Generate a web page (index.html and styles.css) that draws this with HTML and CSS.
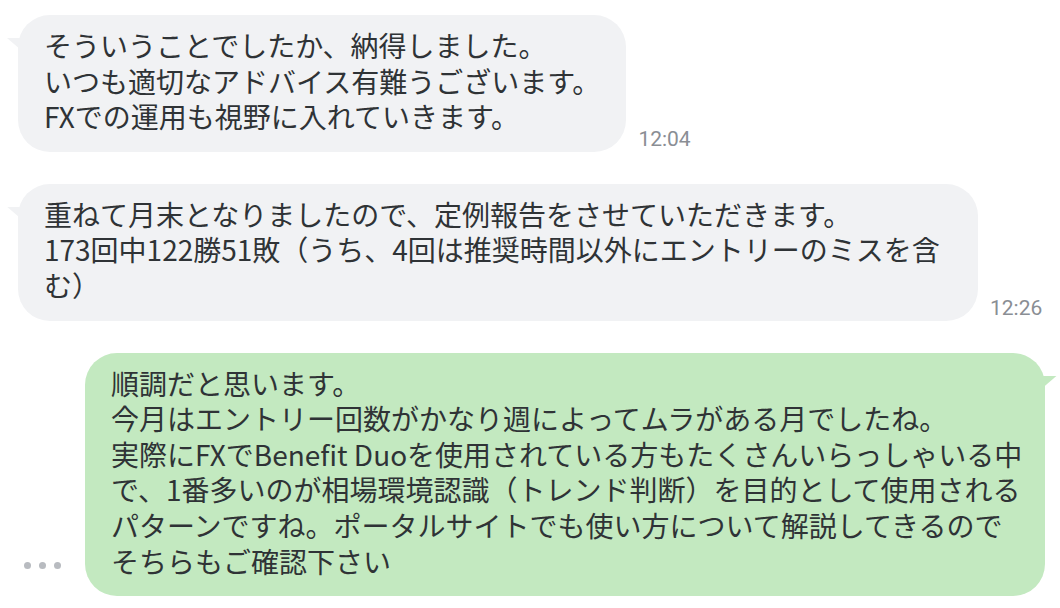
FILE: index.html
```html
<!DOCTYPE html>
<html lang="ja">
<head>
    <meta charset="UTF-8">
    <meta name="viewport" content="width=device-width, initial-scale=1.0">
    <title>Chat</title>
    <link rel="stylesheet" href="styles.css">
</head>
<body>
    <div class="chat">
        <div class="row incoming">
            <div class="bubble gray">そういうことでしたか、納得しました。<br>いつも適切なアドバイス有難うございます。<br>FXでの運用も視野に入れていきます。</div>
            <span class="time">12:04</span>
        </div>

        <div class="row incoming">
            <div class="bubble gray">重ねて月末となりましたので、定例報告をさせていただきます。<br>173回中122勝51敗（うち、4回は推奨時間以外にエントリーのミスを含む）</div>
            <span class="time">12:26</span>
        </div>

        <div class="row outgoing">
            <span class="dots"><i></i><i></i><i></i></span>
            <div class="bubble green">順調だと思います。<br>今月はエントリー回数がかなり週によってムラがある月でしたね。<br>実際にFXでBenefit Duoを使用されている方もたくさんいらっしゃいる中で、1番多いのが相場環境認識（トレンド判断）を目的として使用されるパターンですね。ポータルサイトでも使い方について解説してきるのでそちらもご確認下さい</div>
        </div>
    </div>
</body>
</html>
```

FILE: styles.css
```css
body {
    margin: 0;
    background-color: #ffffff;
    font-family: "Noto Sans CJK JP", "Noto Sans", sans-serif;
    color: #2f3336;
}
.chat {
    display: flex;
    flex-direction: column;
    gap: 32px;
    padding: 15px 15px 0 18px;
}
.row {
    display: flex;
    align-items: flex-end;
}
.outgoing {
    justify-content: flex-end;
}
.bubble {
    position: relative;
    padding: 13px 26px 17px;
    border-radius: 32px;
    font-size: 28px;
    line-height: 35.6px;
}
.gray {
    max-width: 908px;
    background-color: #f1f2f4;
}
.green {
    max-width: 914px;
    padding-right: 20px;
    background-color: #c3e9c0;
}
/* little tails at the top corner */
.gray::before,
.green::before {
    content: "";
    position: absolute;
    top: 23px;
    width: 14px;
    height: 12px;
}
.gray::before {
    left: -11px;
    background-color: #f1f2f4;
    clip-path: polygon(0 0, 100% 0, 100% 100%);
}
.green::before {
    right: -12px;
    background-color: #c3e9c0;
    clip-path: polygon(0 0, 100% 0, 0 100%);
}
.time {
    margin-left: 12px;
    margin-bottom: 1px;
    font-family: Roboto, "Liberation Sans", sans-serif;
    font-size: 21px;
    color: #8a8e94;
}
.dots {
    display: flex;
    gap: 8px;
    margin-right: 24px;
    margin-bottom: 27px;
}
.dots i {
    width: 7px;
    height: 7px;
    border-radius: 50%;
    background-color: #b8bbc0;
}
```
